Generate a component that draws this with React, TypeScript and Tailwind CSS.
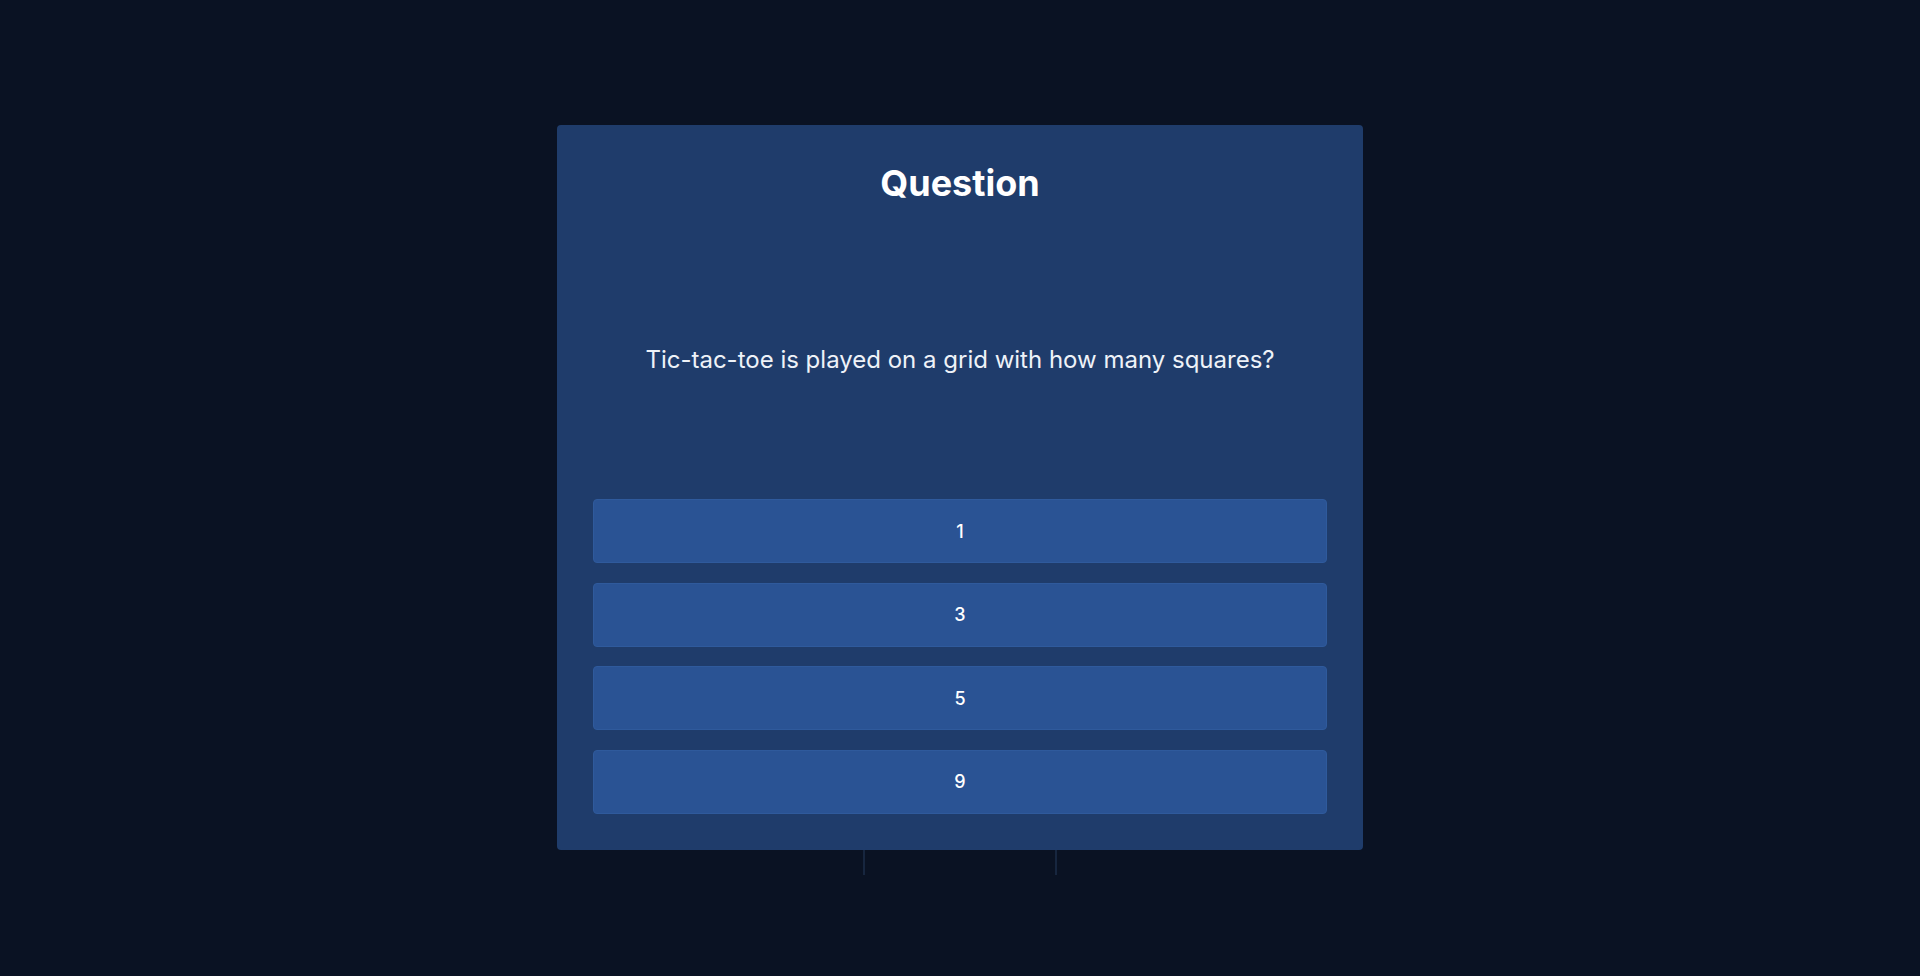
const options = ["1", "3", "5", "9"];

export default function App() {
  return (
    <div
      className="min-h-screen w-full bg-[#0a1223] flex flex-col items-center pt-[125px]"
      style={{ fontFamily: "Inter, 'Noto Sans', sans-serif" }}
    >
      <div className="w-[806px] bg-[#1f3c6b] rounded-[4px] px-9 pt-9 pb-9 flex flex-col">
        <h1 className="text-[36px] leading-[44px] font-bold text-white text-center">Question</h1>

        <div className="pt-[139px] pb-[123px] flex justify-center">
          <p className="text-[24px] leading-8 text-[#eef2f8] text-center">
            Tic-tac-toe is played on a grid with how many squares?
          </p>
        </div>

        <div className="flex flex-col gap-[19.5px]">
          {options.map((opt) => (
            <button
              key={opt}
              className="h-16 w-full rounded-[4px] bg-[#2a5394] border border-[#2f5a9c] text-white text-[18px] font-medium flex items-center justify-center"
            >
              {opt}
            </button>
          ))}
        </div>
      </div>

      <div className="w-[194px] h-[25px] border-x-2 border-[#17263f]" />
    </div>
  );
}
